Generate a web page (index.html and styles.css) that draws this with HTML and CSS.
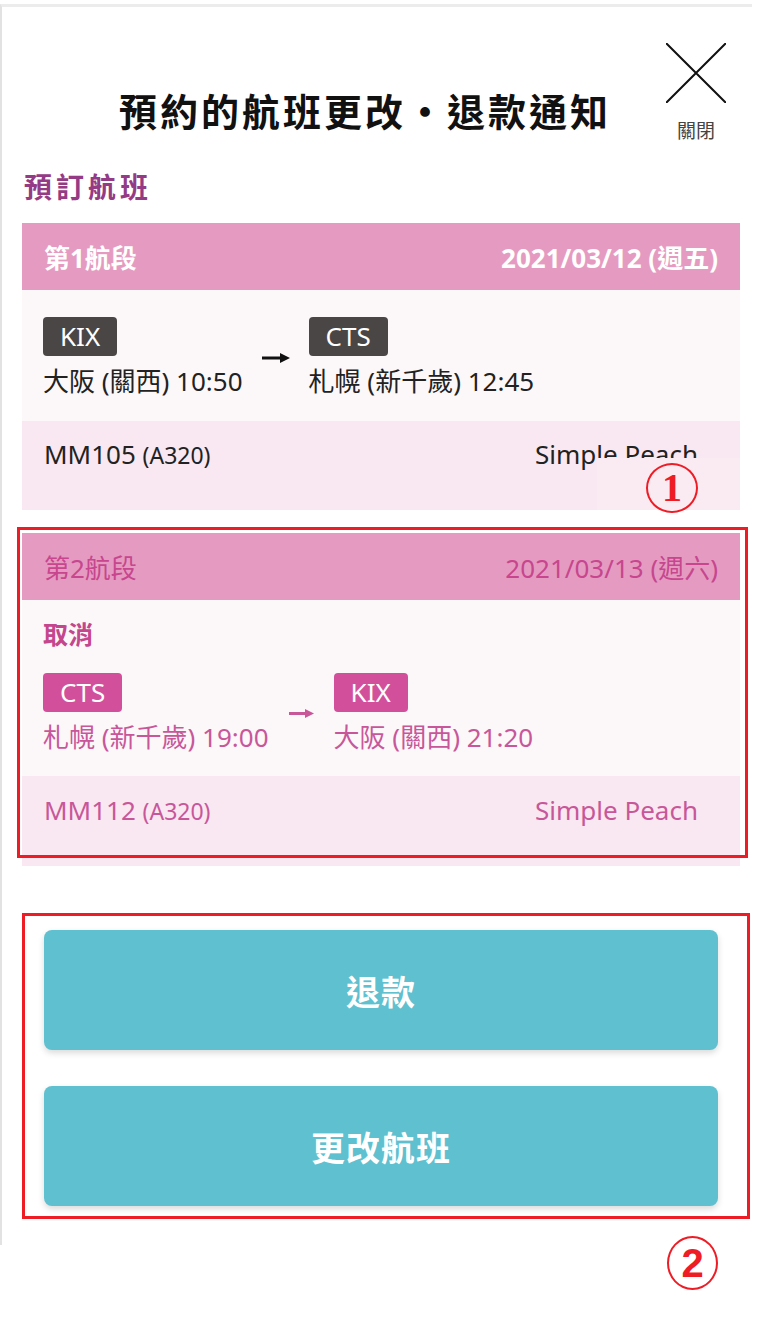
FILE: index.html
```html
<!DOCTYPE html>
<html lang="zh-Hant">
<head>
  <meta charset="UTF-8">
  <meta name="viewport" content="width=device-width, initial-scale=1.0">
  <title>預約的航班更改・退款通知</title>
  <link rel="stylesheet" href="styles.css">
</head>
<body>
  <div class="modal">
    <div class="modal-header">
      <h1 class="modal-title">預約的航班更改・退款通知</h1>
      <div class="close">
        <svg class="close-icon" width="60" height="60" viewBox="0 0 60 60">
          <path d="M0 0 L60 60 M60 0 L0 60" stroke="#111" stroke-width="2" fill="none"/>
        </svg>
        <span class="close-label">關閉</span>
      </div>
    </div>

    <h2 class="section-title">預訂航班</h2>

    <!-- 第1航段 -->
    <div class="leg">
      <div class="leg-head">
        <span>第1航段</span>
        <span>2021/03/12 (週五)</span>
      </div>
      <div class="leg-body">
        <div class="route">
          <div class="stop">
            <span class="code">KIX</span>
            <div class="city">大阪 (關西) 10:50</div>
          </div>
          <svg class="arrow" width="28" height="14" viewBox="0 0 28 14">
            <path d="M0 7 H20" stroke="#111" stroke-width="3"/>
            <path d="M18 2 L28 7 L18 12 Z" fill="#111"/>
          </svg>
          <div class="stop">
            <span class="code">CTS</span>
            <div class="city">札幌 (新千歲) 12:45</div>
          </div>
        </div>
      </div>
      <div class="leg-foot">
        <span class="flight">MM105 <small>(A320)</small></span>
        <span class="fare">Simple Peach</span>
        <div class="note-cover"><span class="mark">1</span></div>
      </div>
    </div>

    <!-- 第2航段（取消） -->
    <div class="leg leg-cancel">
      <div class="leg-head">
        <span>第2航段</span>
        <span>2021/03/13 (週六)</span>
      </div>
      <div class="leg-body">
        <div class="status">取消</div>
        <div class="route">
          <div class="stop">
            <span class="code">CTS</span>
            <div class="city">札幌 (新千歲) 19:00</div>
          </div>
          <svg class="arrow arrow-small" width="25" height="13" viewBox="0 0 25 13">
            <path d="M0 6.5 H18" stroke="#c8579a" stroke-width="3"/>
            <path d="M16 2 L25 6.5 L16 11 Z" fill="#c8579a"/>
          </svg>
          <div class="stop">
            <span class="code">KIX</span>
            <div class="city">大阪 (關西) 21:20</div>
          </div>
        </div>
      </div>
      <div class="leg-foot">
        <span class="flight">MM112 <small>(A320)</small></span>
        <span class="fare">Simple Peach</span>
      </div>
      <div class="note-box note-box-leg"></div>
    </div>

    <div class="actions">
      <button class="btn">退款</button>
      <button class="btn">更改航班</button>
      <div class="note-box note-box-actions"></div>
    </div>
  </div>

  <div class="mark-row"><span class="mark">2</span></div>
</body>
</html>
```

FILE: styles.css
```css
body {
  margin: 0;
  background-color: #ffffff;
  font-family: "Noto Sans", "Noto Sans CJK TC", sans-serif;
  color: #222;
}

.modal {
  margin-top: 4px;
  width: 752px;
  height: 1241px;
  border-top: 3px solid #ececec;
  border-left: 2px solid #e2e2e2;
  padding: 0 12px 0 20px;
  box-sizing: border-box;
}

/* 标题 + 关闭 */
.modal-header {
  display: flex;
  align-items: flex-start;
}

.modal-title {
  flex: 1;
  margin: 81px 0 0;
  padding-left: 42px;
  text-align: center;
  font-size: 38px;
  line-height: 46px;
  font-weight: 700;
  letter-spacing: 3px;
  color: #111;
}

.close {
  display: flex;
  flex-direction: column;
  align-items: center;
  margin: 36px 14px 0 0;
  width: 60px;
}

.close-label {
  margin-top: 16px;
  font-size: 19px;
  line-height: 24px;
  color: #444;
}

.section-title {
  margin: 26px 0 18px 2px;
  font-size: 28px;
  line-height: 36px;
  font-weight: 700;
  letter-spacing: 4px;
  color: #953b86;
}

/* 航段卡片 */
.leg {
  position: relative;
  width: 718px;
}

.leg + .leg {
  margin-top: 23px;
}

.leg-head {
  display: flex;
  justify-content: space-between;
  align-items: center;
  height: 67px;
  padding: 0 22px;
  background-color: #e59bc1;
  color: #ffffff;
  font-size: 26px;
  font-weight: 700;
}

.leg-body {
  padding: 27px 22px 23px 21px;
  background-color: #fcf8fa;
}

.route {
  display: flex;
  align-items: center;
  gap: 19px;
}

.code {
  display: inline-block;
  height: 39px;
  line-height: 39px;
  padding: 0 17px;
  border-radius: 4px;
  background-color: #4b4646;
  color: #ffffff;
  font-size: 26px;
}

.city {
  margin-top: 8px;
  font-size: 26px;
  line-height: 34px;
}

.leg-foot {
  position: relative;
  display: flex;
  justify-content: space-between;
  align-items: baseline;
  height: 89px;
  padding: 16px 42px 0 22px;
  box-sizing: border-box;
  background-color: #f9e8f1;
  font-size: 26px;
  line-height: 34px;
}

.flight small {
  font-size: 23px;
}

/* 取消的航段 */
.leg-cancel .leg-head {
  color: #c7468e;
  font-weight: 400;
}

.leg-cancel .leg-body {
  padding-top: 18px;
  padding-bottom: 22px;
}

.leg-cancel .route {
  gap: 20px;
}

.status {
  margin-bottom: 23px;
  font-size: 25px;
  line-height: 32px;
  font-weight: 700;
  color: #c4468d;
}

.leg-cancel .code {
  background-color: #d2509b;
}

.leg-cancel .city,
.leg-cancel .leg-foot {
  color: #c8579a;
}

.leg-cancel .leg-foot {
  height: 90px;
  padding-top: 17px;
}

/* 按钮 */
.actions {
  position: relative;
  display: flex;
  flex-direction: column;
  gap: 36px;
  margin: 64px 0 0;
  width: 718px;
  padding: 0 22px;
  box-sizing: border-box;
}

.btn {
  height: 120px;
  border: none;
  border-radius: 8px;
  background-color: #5fc0cf;
  box-shadow: 0 3px 6px rgba(0, 0, 0, 0.15);
  color: #ffffff;
  font-family: "Noto Sans CJK TC", sans-serif;
  font-size: 34px;
  font-weight: 700;
  letter-spacing: 1px;
}

/* 标注 */
.note-box {
  position: absolute;
  border: 3px solid #ee1c25;
  pointer-events: none;
}

.note-box-leg {
  top: -6px;
  left: -5px;
  right: -8px;
  bottom: 8px;
}

.note-box-actions {
  top: -17px;
  left: 0;
  right: -10px;
  bottom: -13px;
}

.note-cover {
  position: absolute;
  top: 37px;
  right: 0;
  bottom: 0;
  width: 143px;
  background-color: #faebf3;
}

.note-cover .mark {
  position: absolute;
  top: 5px;
  right: 42px;
}

.mark {
  display: flex;
  justify-content: center;
  align-items: center;
  width: 48px;
  height: 46px;
  border: 2px solid #ee1c25;
  border-radius: 50%;
  color: #ee1c25;
  font-family: "Liberation Serif", serif;
  font-size: 40px;
  font-weight: 700;
  line-height: 1;
}

.mark-row {
  display: flex;
  justify-content: flex-end;
  width: 740px;
  padding-right: 22px;
  margin-top: -9px;
  box-sizing: border-box;
}

.mark-row .mark {
  width: 47px;
  height: 50px;
  font-family: "Liberation Sans", sans-serif;
}
```
